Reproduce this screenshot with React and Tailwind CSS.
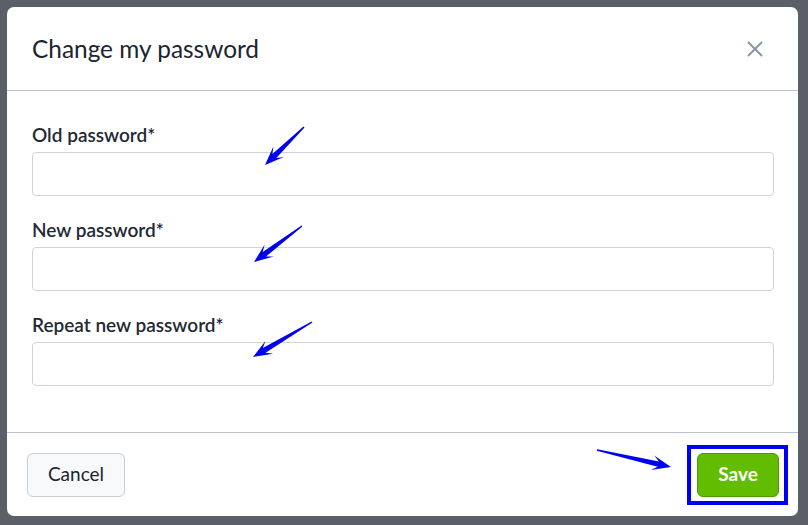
import { X } from "lucide-react"

function Arrow({ from, to }) {
  const [x1, y1] = from
  const [x2, y2] = to
  const len = Math.hypot(x2 - x1, y2 - y1)
  const ux = (x2 - x1) / len
  const uy = (y2 - y1) / len
  const nx = -uy
  const ny = ux
  const bx = x2 - ux * 16
  const by = y2 - uy * 16
  const pt = (x, y) => `${x.toFixed(1)},${y.toFixed(1)}`
  const points = [
    pt(x1 + nx * 0.7, y1 + ny * 0.7),
    pt(bx + ux * 3 + nx * 2.8, by + uy * 3 + ny * 2.8),
    pt(bx - ux * 3 + nx * 7.5, by - uy * 3 + ny * 7.5),
    pt(x2, y2),
    pt(bx - ux * 3 - nx * 7.5, by - uy * 3 - ny * 7.5),
    pt(bx + ux * 3 - nx * 2.8, by + uy * 3 - ny * 2.8),
    pt(x1 - nx * 0.7, y1 - ny * 0.7),
  ].join(" ")
  return <polygon points={points} fill="#0000f0" />
}

const fields = ["Old password*", "New password*", "Repeat new password*"]

export default function App() {
  return (
    <div
      className="relative w-[808px] h-[525px] bg-[#5a5f68] pt-[7px] pl-[7px]"
      style={{ fontFamily: "Lato, 'Noto Sans', sans-serif" }}
    >
      <div className="w-[791px] h-[509px] bg-white rounded-[7px] flex flex-col overflow-hidden">
        {/* Header */}
        <div className="h-[84px] shrink-0 flex items-center justify-between pl-[25px] pr-[30px] border-b border-[#b9c3cb]">
          <h2 className="text-[24.4px] leading-[28px] text-[#1c2430]">Change my password</h2>
          <X className="h-[26px] w-[26px] text-[#8a96a3]" strokeWidth={1.8} />
        </div>

        {/* Body */}
        <div className="flex-1 flex flex-col gap-[24px] px-[25px] pt-[34px] border-b border-[#b9c3cb]">
          {fields.map((label) => (
            <div key={label} className="flex flex-col gap-[7px]">
              <label className="text-[19px] leading-[20px] font-semibold text-[#1f2933]">{label}</label>
              <input
                type="password"
                className="h-[44px] w-[742px] rounded-[4px] border border-[#cfd4d9] bg-white outline-none"
              />
            </div>
          ))}
        </div>

        {/* Footer */}
        <div className="h-[83px] shrink-0 flex items-center justify-between pl-[20px] pr-[20px]">
          <button className="h-[44px] w-[98px] rounded-[6px] border border-[#c7ced5] bg-[#f8f9fa] text-[19px] text-[#1c2430]">
            Cancel
          </button>
          <div className="border-[4px] border-[#0000f0] pl-[6px] pr-[5px] py-[4px] mr-[-10px]">
            <button className="h-[44px] w-[82px] rounded-[6px] border border-[#4f9a00] bg-[#62bd00] text-[19px] font-bold text-white">
              Save
            </button>
          </div>
        </div>
      </div>

      {/* Annotation arrows */}
      <svg className="absolute inset-0 pointer-events-none" width="808" height="525">
        <Arrow from={[304, 127]} to={[265, 165]} />
        <Arrow from={[302, 226]} to={[254, 262]} />
        <Arrow from={[312, 322]} to={[253, 357]} />
        <Arrow from={[597, 450]} to={[671, 467]} />
      </svg>
    </div>
  )
}
